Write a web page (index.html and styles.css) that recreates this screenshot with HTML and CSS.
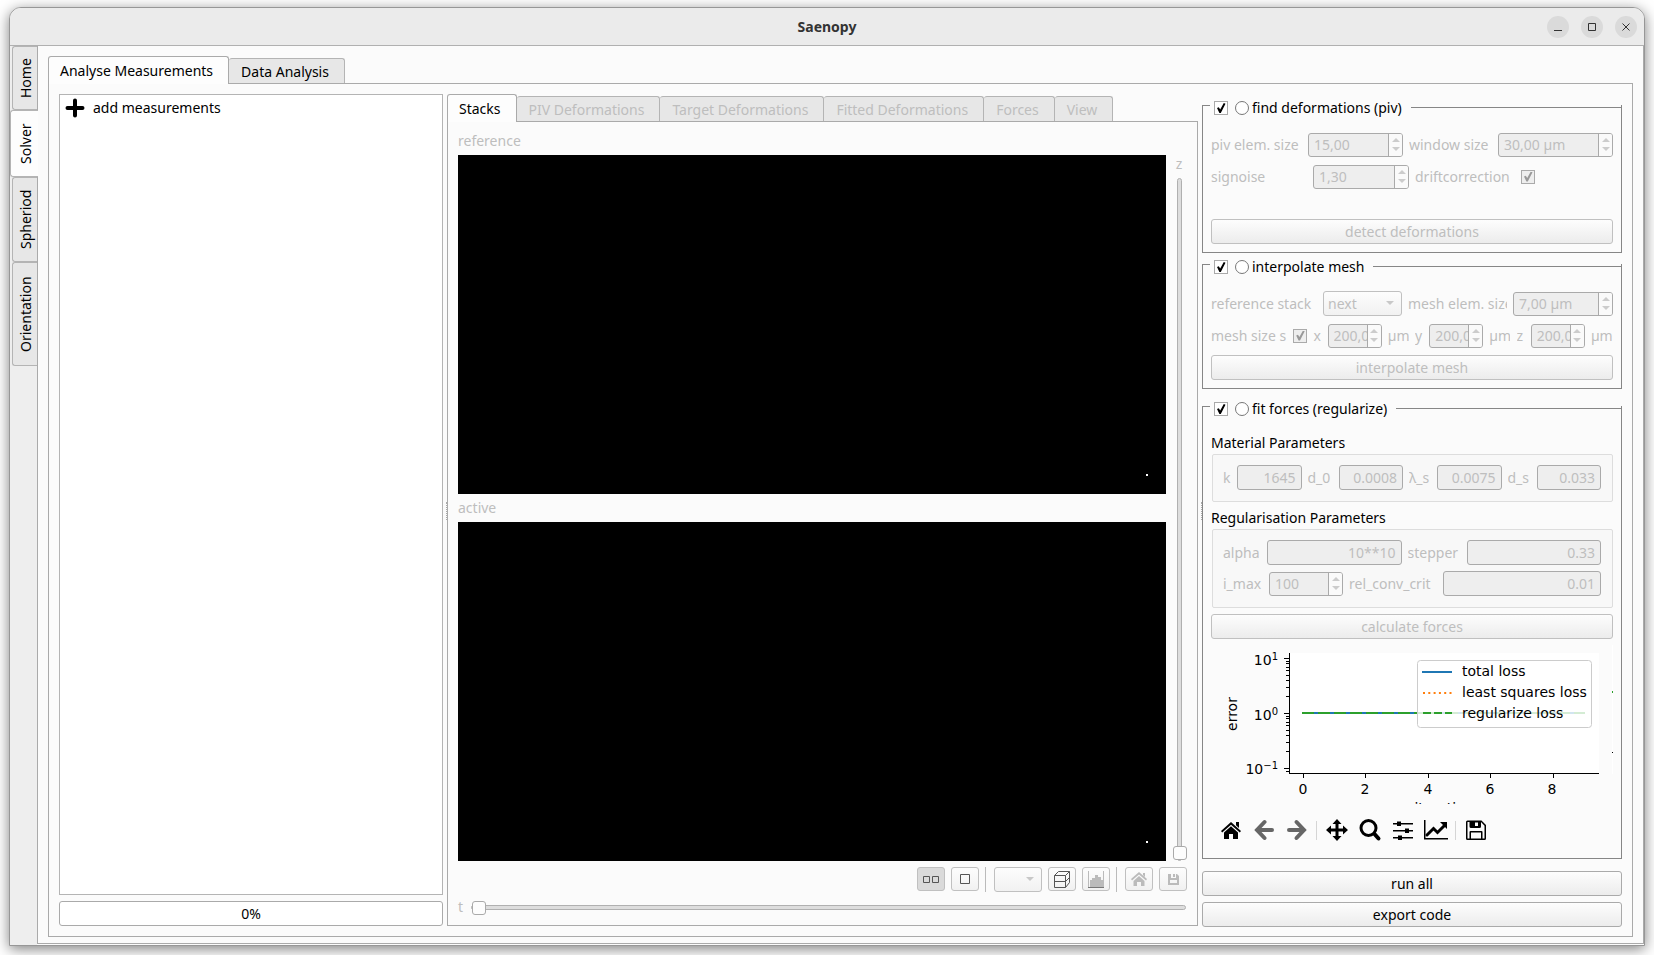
FILE: index.html
```html
<!DOCTYPE html>
<html lang="en">
  <head>
    <meta charset="UTF-8" />
    <meta name="viewport" content="width=device-width, initial-scale=1.0" />
    <title>Saenopy</title>
    <link rel="stylesheet" href="styles.css">
  </head>
  <body>
    <div class="window">
      <header class="titlebar">
        <h1>Saenopy</h1>
        <div class="window-buttons">
          <button type="button" aria-label="Minimize"><svg viewBox="0 0 22 22"><path d="M7 14.5h8" /></svg></button>
          <button type="button" aria-label="Maximize"><svg viewBox="0 0 22 22"><path d="M7.5 7.5h7v7h-7z" /></svg></button>
          <button type="button" aria-label="Close"><svg viewBox="0 0 22 22"><path d="M7.5 7.5l7 7M14.5 7.5l-7 7" /></svg></button>
        </div>
      </header>

      <div class="shell">
        <nav class="side-tabs">
          <button type="button" class="side-tab side-home">Home</button>
          <button type="button" class="side-tab side-solver active">Solver</button>
          <button type="button" class="side-tab side-spheroid">Spheriod</button>
          <button type="button" class="side-tab side-orientation">Orientation</button>
        </nav>

        <main class="page">
          <div class="tabs">
            <button type="button" class="tab active">Analyse Measurements</button>
            <button type="button" class="tab">Data Analysis</button>
          </div>

          <div class="pane workspace">
            <section class="measurements">
              <div class="list">
                <button type="button" class="list-item">
                  <svg viewBox="0 0 20 20"><path d="M10 2.500v15M2.500 10h15" /></svg>
                  add measurements
                </button>
              </div>
              <div class="progress" role="progressbar" aria-valuenow="0">0%</div>
            </section>

            <div class="splitter"></div>

            <section class="viewer">
              <div class="tabs">
                <button type="button" class="tab active">Stacks</button>
                <button type="button" class="tab" disabled>PIV Deformations</button>
                <button type="button" class="tab" disabled>Target Deformations</button>
                <button type="button" class="tab" disabled>Fitted Deformations</button>
                <button type="button" class="tab" disabled>Forces</button>
                <button type="button" class="tab" disabled>View</button>
              </div>
              <div class="pane stacks">
                <div class="stack-area">
                  <div class="stack-images">
                    <p>reference</p>
                    <div class="stack-image"><span class="scale-dot"></span></div>
                    <p>active</p>
                    <div class="stack-image"><span class="scale-dot"></span></div>
                  </div>
                  <div class="z-slider">
                    <label for="z">z</label>
                    <input type="range" id="z" min="0" max="100" value="0" disabled>
                  </div>
                </div>

                <div class="view-tools">
                  <button type="button" class="tool pressed" disabled aria-label="Both stacks">
                    <svg viewBox="0 0 20 20"><path d="M2.500 7.500h6v6h-6zM11.500 7.500h6v6h-6z" /></svg>
                  </button>
                  <button type="button" class="tool" disabled aria-label="Single stack">
                    <svg viewBox="0 0 20 20"><path d="M5.500 5.500h9v9h-9z" /></svg>
                  </button>
                  <span class="tool-sep"></span>
                  <div class="select channel">
                    <select aria-label="Channel" disabled><option></option></select>
                  </div>
                  <button type="button" class="tool" disabled aria-label="Projection">
                    <svg viewBox="0 0 20 20"><path d="M2.500 6.500h11v12h-11zM2.500 6.500l4-4h11l-4 4M17.500 2.500v11l-4 5M2.500 12.500h11l4-4" /></svg>
                  </button>
                  <button type="button" class="tool" disabled aria-label="Contrast">
                    <svg viewBox="0 0 20 20" class="soft"><path class="fill" d="M4 18v-7h2V9h3V6h3v2h3v3h2v7z" /><path d="M2.500 2v16M17.500 2v16" /><path class="dark" d="M2 18.500h16" /></svg>
                  </button>
                  <span class="tool-sep"></span>
                  <button type="button" class="tool" disabled aria-label="Reset view">
                    <svg viewBox="0 0 20 20" class="soft"><path class="fill" d="M10 3l8 7-1 1.500-7-6-7 6L2 10zM14 4h2v4l-2-2zM10 7l5.500 5v5H12v-4H8v4H4.500v-5z" /></svg>
                  </button>
                  <button type="button" class="tool" disabled aria-label="Save view">
                    <svg viewBox="0 0 20 20" class="soft"><path class="fill" d="M5 5h3v4h5V5h1l2 2v9H5zM7 11v3h7v-3zM10 5h2v3h-2z" fill-rule="evenodd" /></svg>
                  </button>
                </div>

                <div class="t-slider">
                  <label for="t">t</label>
                  <input type="range" id="t" min="0" max="100" value="0" disabled>
                </div>
              </div>
            </section>

            <div class="splitter"></div>

            <aside class="parameters">
              <section class="group piv">
                <div class="group-head">
                  <span class="stub"></span>
                  <input type="checkbox" checked aria-label="Enable find deformations">
                  <input type="radio" id="step-piv">
                  <label for="step-piv">find deformations (piv)</label>
                  <span class="rule"></span>
                </div>
                <div class="row row-piv">
                  <label for="elem">piv elem. size</label>
                  <div class="spin"><input type="text" id="elem" value="15,00" disabled><span class="arrows"></span></div>
                  <label for="win">window size</label>
                  <div class="spin"><input type="text" id="win" value="30,00 µm" disabled><span class="arrows"></span></div>
                </div>
                <div class="row row-signoise">
                  <label for="signoise">signoise</label>
                  <div class="spin"><input type="text" id="signoise" value="1,30" disabled><span class="arrows"></span></div>
                  <label for="drift">driftcorrection</label>
                  <input type="checkbox" id="drift" checked disabled>
                </div>
                <button type="button" class="btn push-down" disabled>detect deformations</button>
              </section>

              <section class="group mesh">
                <div class="group-head">
                  <span class="stub"></span>
                  <input type="checkbox" checked aria-label="Enable interpolate mesh">
                  <input type="radio" id="step-mesh">
                  <label for="step-mesh">interpolate mesh</label>
                  <span class="rule"></span>
                </div>
                <div class="row row-reference">
                  <label for="ref">reference stack</label>
                  <div class="select"><select id="ref" disabled><option>next</option></select></div>
                  <label for="mesh-elem">mesh elem. size</label>
                  <div class="spin"><input type="text" id="mesh-elem" value="7,00 µm" disabled><span class="arrows"></span></div>
                </div>
                <div class="row row-mesh">
                  <label for="same">mesh size s</label>
                  <input type="checkbox" id="same" checked disabled>
                  <label for="mx">x</label>
                  <div class="spin"><input type="text" id="mx" value="200,00" disabled><span class="arrows"></span></div>
                  <span>µm</span>
                  <label for="my">y</label>
                  <div class="spin"><input type="text" id="my" value="200,00" disabled><span class="arrows"></span></div>
                  <span>µm</span>
                  <label for="mz">z</label>
                  <div class="spin"><input type="text" id="mz" value="200,00" disabled><span class="arrows"></span></div>
                  <span>µm</span>
                </div>
                <button type="button" class="btn" disabled>interpolate mesh</button>
              </section>

              <section class="group forces">
                <div class="group-head">
                  <span class="stub"></span>
                  <input type="checkbox" checked aria-label="Enable fit forces">
                  <input type="radio" id="step-forces">
                  <label for="step-forces">fit forces (regularize)</label>
                  <span class="rule"></span>
                </div>

                <h2>Material Parameters</h2>
                <div class="box">
                  <div class="row row-material">
                    <label for="k">k</label>
                    <input type="text" id="k" class="field" value="1645" disabled>
                    <label for="d0">d_0</label>
                    <input type="text" id="d0" class="field" value="0.0008" disabled>
                    <label for="ls">λ_s</label>
                    <input type="text" id="ls" class="field" value="0.0075" disabled>
                    <label for="ds">d_s</label>
                    <input type="text" id="ds" class="field" value="0.033" disabled>
                  </div>
                </div>

                <h2>Regularisation Parameters</h2>
                <div class="box">
                  <div class="row row-alpha">
                    <label for="alpha">alpha</label>
                    <input type="text" id="alpha" class="field" value="10**10" disabled>
                    <label for="stepper">stepper</label>
                    <input type="text" id="stepper" class="field" value="0.33" disabled>
                  </div>
                  <div class="row row-imax">
                    <label for="imax">i_max</label>
                    <div class="spin"><input type="text" id="imax" value="100" disabled><span class="arrows"></span></div>
                    <label for="crit">rel_conv_crit</label>
                    <input type="text" id="crit" class="field" value="0.01" disabled>
                  </div>
                </div>
                <button type="button" class="btn" disabled>calculate forces</button>

                <svg class="plot" viewBox="0 0 402 159" id="plot">
                  <rect x="79" y="8" width="309" height="121" fill="#fff" />
                  <g id="ticks" stroke="#000">
                    <path d="M78.500 8v121M78 128.500h310" fill="none" />
                  </g>
                  <g class="loss">
                    <path d="M91 68h283" stroke="#1f77b4" />
                    <path d="M91 68h283" stroke="#2ca02c" stroke-dasharray="12 4" />
                  </g>
                  <rect x="206.500" y="15.500" width="174" height="67" rx="3" fill="#fff" fill-opacity=".8" stroke="#ccc" />
                  <g class="loss">
                    <path d="M211 27h30" stroke="#1f77b4" />
                    <path d="M212 48h29" stroke="#ff7f0e" stroke-dasharray="2 3.300" />
                    <path d="M212 68h29" stroke="#2ca02c" stroke-dasharray="8 3" />
                  </g>
                  <text x="251" y="31">total loss</text>
                  <text x="251" y="52">least squares loss</text>
                  <text x="251" y="73">regularize loss</text>
                  <text class="end" x="67" y="20">10<tspan class="sup" dy="-5">1</tspan></text>
                  <text class="end" x="67" y="75">10<tspan class="sup" dy="-5">0</tspan></text>
                  <text class="end" x="67" y="129">10<tspan class="sup" dy="-5">−1</tspan></text>
                  <text class="mid" x="92" y="149">0</text>
                  <text class="mid" x="154" y="149">2</text>
                  <text class="mid" x="217" y="149">4</text>
                  <text class="mid" x="279" y="149">6</text>
                  <text class="mid" x="341" y="149">8</text>
                  <text class="mid" transform="translate(26 69) rotate(-90)">error</text>
                  <text class="mid" x="233" y="168">iteration</text>
                  <path d="M401.500 0v129" stroke="#fff" />
                  <path d="M401 46h1v2h-1z" fill="#2ca02c" />
                  <path d="M401 107h1v1h-1z" />
                </svg>

                <div class="plot-tools">
                  <button type="button" aria-label="Home"><svg viewBox="0 0 24 24"><path d="M12 4l10 9-1.200 1.500L12 6.700 3.200 14.500 2 13zM17 4h3v6l-3-2.700zM12 8.300l7 6.200V21h-5v-5h-4v5H5v-6.500z" /></svg></button>
                  <button type="button" class="dim" aria-label="Back"><svg viewBox="0 0 24 24"><path class="thick" d="M12.500 4L5 12l7.500 8M5 12h15" /></svg></button>
                  <button type="button" class="dim" aria-label="Forward"><svg viewBox="0 0 24 24"><path class="thick" d="M11.500 4l7.500 8-7.500 8M19 12H4" /></svg></button>
                  <span class="bar"></span>
                  <button type="button" aria-label="Pan"><svg viewBox="0 0 24 24"><path d="M12 1l4.500 5h-3v4.500H18v-3l5 4.500-5 4.500v-3h-4.500V18h3L12 23l-4.500-5h3v-4.500H6v3L1 12l5-4.500v3h4.500V6h-3z" /></svg></button>
                  <button type="button" aria-label="Zoom"><svg viewBox="0 0 24 24"><circle class="lens" cx="10.500" cy="10" r="7.500" /><path class="thick" d="M16.500 16l4 4.500" /></svg></button>
                  <button type="button" aria-label="Configure subplots"><svg viewBox="0 0 24 24"><path d="M2 5h20v1.500H2zM2 12h20v1.500H2zM2 19h20v1.500H2zM6 3.500h4v4.500H6zM14 10.500h4V15h-4zM7 17.500h4V22H7z" /></svg></button>
                  <button type="button" aria-label="Edit axis"><svg viewBox="0 0 24 24"><path d="M0 2h1.500v18H24v1.500H0z" /><path class="trend" d="M3 17l6.500-6.500 4 4L21 7" /><path d="M16 4h7v7z" /></svg></button>
                  <span class="bar"></span>
                  <button type="button" aria-label="Save"><svg viewBox="0 0 24 24"><path fill-rule="evenodd" d="M2 4q0-1.500 1.500-1.500h14l4.500 4.500v13.500q0 1.500-1.500 1.500h-17Q2 22 2 20.500zM3.500 4v16.500h2V14q0-1 1-1h11q1 0 1 1v6.500h2V7.700L17 4v4.500q0 1.500-1.500 1.500H7Q5.500 10 5.500 8.500V4zM11 4.500V8h3V4.500zM7 14.500v6h10v-6z" /></svg></button>
                </div>
              </section>

              <button type="button" class="btn">run all</button>
              <button type="button" class="btn">export code</button>
            </aside>
          </div>
        </main>
      </div>
    </div>

    <script>
      const ticks = document.getElementById("ticks");

      function addTick(d) {
        const path = document.createElementNS("http://www.w3.org/2000/svg", "path");
        path.setAttribute("d", d);
        ticks.appendChild(path);
      }

      [92.5, 154.5, 217.5, 279.5, 342.5].forEach((x) => addTick(`M${x} 129v4`));

      // log axis, one decade is 55px high
      for (let decade = -2; decade <= 1; decade++) {
        for (let k = 1; k < 10; k++) {
          const y = 68.5 - 55 * (decade + Math.log10(k));
          if (y < 8 || y > 128) continue;
          addTick(`M78 ${Math.floor(y) + 0.5}h${k === 1 ? -5 : -3}`);
        }
      }
    </script>
  </body>
</html>
```
FILE: styles.css
```css
* {
  box-sizing: border-box;
}

body {
  margin: 0;
  height: 100vh;
  padding: 7px 9px 9px;
  background: #fff;
  color: #000;
  font-family: "Noto Sans", "Open Sans", sans-serif;
  font-size: 14px;
  line-height: 20px;
  overflow: hidden;
}

button,
input,
select {
  font: inherit;
  color: inherit;
  margin: 0;
}

h1,
h2,
p {
  margin: 0;
  font-size: inherit;
  font-weight: normal;
}

.window {
  display: flex;
  flex-direction: column;
  height: 100%;
  border: 1px solid #979797;
  border-radius: 12px 12px 0 0;
  background: #fbfbfb;
  box-shadow: 0 3px 14px rgba(0, 0, 0, 0.5);
}

/* title bar */
.titlebar {
  display: grid;
  grid-template-columns: 1fr auto 1fr;
  align-items: center;
  height: 38px;
  padding: 0 7px;
  border-bottom: 1px solid #b0b0b0;
  border-radius: 11px 11px 0 0;
  background: #ebebeb;
  flex: none;
}

.titlebar h1 {
  grid-column: 2;
  font-weight: bold;
  color: #333;
}

.window-buttons {
  display: flex;
  justify-content: flex-end;
  gap: 12px;
}

.window-buttons button {
  width: 22px;
  height: 22px;
  padding: 0;
  border: 0;
  border-radius: 50%;
  background: #dadada;
}

.window-buttons svg {
  display: block;
  fill: none;
  stroke: #333;
}

.shell {
  display: flex;
  flex: 1;
  min-height: 0;
}

/* vertical tabs */
.side-tabs {
  width: 27px;
  background: #eee;
  flex: none;
}

.side-tab {
  display: block;
  width: 25px;
  margin-left: 2px;
  padding: 0 2px 0 0;
  border: 1px solid #b4b4b4;
  border-left-width: 0;
  border-radius: 0 3px 3px 0;
  background: #e7e7e7;
  writing-mode: vertical-rl;
  transform: rotate(180deg);
}

.side-tab.active {
  position: relative;
  width: 28px;
  margin-left: 0;
  background: #fdfdfd;
}

.side-home {
  height: 64px;
}

.side-solver {
  height: 67px;
}

.side-spheroid {
  height: 85px;
}

.side-orientation {
  height: 104px;
}

.page {
  display: flex;
  flex-direction: column;
  flex: 1;
  min-width: 0;
  padding: 10px 10px 6px;
  margin-bottom: 1px;
  border: 1px solid #aaa;
  border-top: 0;
}

/* horizontal tabs */
.tabs {
  display: flex;
  align-items: flex-end;
  height: 28px;
  margin-bottom: -1px;
  flex: none;
}

.tab {
  height: 26px;
  padding: 2px 15px 0 12px;
  border: 1px solid #b4b4b4;
  border-left-width: 0;
  border-bottom-color: #aaa;
  border-radius: 3px 3px 0 0;
  background: #e7e7e7;
  white-space: nowrap;
}

.tab.active {
  position: relative;
  height: 28px;
  padding: 0 15px 0 11px;
  border-color: #aaa;
  border-left-width: 1px;
  border-bottom: 0;
  background: #fdfdfd;
}

.tab:disabled {
  color: #bebebe;
}

.pane {
  flex: 1;
  min-height: 0;
  border: 1px solid #aaa;
}

.workspace {
  display: flex;
  padding: 10px 10px 9px;
}

.splitter {
  width: 4px;
  height: 18px;
  align-self: center;
  border-right: 1px dotted #aaa;
  flex: none;
}

/* measurement list */
.measurements {
  display: flex;
  flex-direction: column;
  gap: 6px;
  width: 384px;
  flex: none;
}

.list {
  flex: 1;
  border: 1px solid #b4b4b4;
  background: #fff;
}

.list-item {
  display: flex;
  align-items: center;
  gap: 8px;
  width: 100%;
  padding: 3px 5px;
  border: 0;
  background: none;
}

.list-item svg {
  width: 20px;
  height: 20px;
  stroke: #000;
  stroke-width: 4;
  stroke-linecap: round;
}

.progress {
  height: 25px;
  border: 1px solid #aaa;
  border-radius: 3px;
  background: #fff;
  text-align: center;
  line-height: 23px;
  margin-bottom: 1px;
}

/* image stacks */
.viewer {
  display: flex;
  flex-direction: column;
  flex: 1;
  min-width: 0;
}

.stacks {
  display: flex;
  flex-direction: column;
  padding: 9px 11px 11px 10px;
  margin-bottom: 1px;
  color: #bebebe;
}

.stack-area {
  display: flex;
  flex: 1;
  gap: 6px;
}

.stack-images {
  display: flex;
  flex-direction: column;
  gap: 4px;
  flex: 1;
}

.stack-image {
  display: flex;
  justify-content: flex-end;
  align-items: flex-end;
  flex: 1;
  padding: 18px;
  background: #000;
}

.scale-dot {
  width: 2px;
  height: 2px;
  background: #fff;
}

.z-slider {
  display: flex;
  flex-direction: column;
  align-items: center;
  gap: 4px;
  width: 14px;
  padding-top: 23px;
}

.z-slider input {
  writing-mode: vertical-lr;
  direction: rtl;
  width: 14px;
  flex: 1;
  min-height: 0;
}

.t-slider {
  display: flex;
  align-items: center;
  gap: 8px;
  height: 14px;
  margin-top: 8px;
}

.t-slider input {
  flex: 1;
  height: 14px;
}

input[type="range"] {
  appearance: none;
  background: none;
}

input[type="range"]::-webkit-slider-runnable-track {
  border: 1px solid #b0b0b0;
  border-radius: 3px;
  background: #ddd;
}

.z-slider input::-webkit-slider-runnable-track {
  width: 5px;
}

.t-slider input::-webkit-slider-runnable-track {
  height: 5px;
}

input[type="range"]::-webkit-slider-thumb {
  appearance: none;
  width: 14px;
  height: 14px;
  border: 1px solid #aaa;
  border-radius: 3px;
  background: #fdfdfd;
}

.z-slider input::-webkit-slider-thumb {
  margin-left: -5px;
}

.t-slider input::-webkit-slider-thumb {
  margin-top: -5px;
}

.view-tools {
  display: flex;
  justify-content: flex-end;
  gap: 6px;
  margin-top: 6px;
  margin-right: -1px;
}

.tool {
  width: 28px;
  height: 24px;
  padding: 1px 3px;
  border: 1px solid #c0c0c0;
  border-radius: 3px;
  background: linear-gradient(#fdfdfd, #f1f1f1);
}

.tool.pressed {
  background: #dadada;
}

.tool svg {
  display: block;
  width: 20px;
  height: 20px;
  fill: none;
  stroke: #555;
}

.tool svg.soft {
  stroke: #bbb;
}

.tool svg .fill {
  fill: #bbb;
  stroke: none;
}

.tool svg .dark {
  stroke: #777;
}

.tool-sep {
  width: 2px;
  margin-right: 1px;
  border-left: 1px solid #bbb;
}

/* drop-downs */
.select {
  position: relative;
  height: 25px;
}

.channel {
  width: 48px;
}

.select::after {
  content: "";
  position: absolute;
  right: 8px;
  top: 10px;
  border: 4px solid transparent;
  border-top-color: #c8c8c8;
}

.select select {
  appearance: none;
  width: 100%;
  height: 100%;
  padding: 0 4px;
  border: 1px solid #c0c0c0;
  border-radius: 3px;
  background: linear-gradient(#fdfdfd, #f1f1f1);
  opacity: 1;
}

/* parameter groups */
.parameters {
  display: flex;
  flex-direction: column;
  width: 420px;
  gap: 6px;
  flex: none;
}

.group {
  display: flex;
  flex-direction: column;
  padding: 0 8px 8px;
  border: 1px solid #868686;
  border-top: 0;
}

.piv {
  height: 148px;
  margin-top: 11px;
}

.mesh {
  height: 125px;
  margin-top: 5px;
}

.forces {
  flex: 1;
  margin: 11px 0 6px;
}

.group-head {
  display: flex;
  align-items: center;
  height: 20px;
  margin: -7px -8px 0;
  flex: none;
}

.group-head input[type="radio"] {
  margin: 0 3px 0 7px;
}

.stub {
  width: 7px;
  height: 6px;
  margin-right: 4px;
  border-top: 1px solid #868686;
}

.rule {
  flex: 1;
  height: 1px;
  margin: 0 0 2px 9px;
  background: #868686;
}

input[type="checkbox"] {
  appearance: none;
  width: 14px;
  height: 14px;
  border: 1px solid #aaa;
  background: #fff;
  flex: none;
}

input[type="checkbox"]::before {
  content: "";
  display: block;
  width: 10px;
  height: 10px;
  margin: 1px;
  background: #000;
  clip-path: polygon(10% 50%, 28% 42%, 42% 66%, 78% 0, 95% 8%, 48% 100%, 34% 100%);
}

input[type="checkbox"]:disabled {
  background: #eee;
}

input[type="checkbox"]:disabled::before {
  background: #999;
}

input[type="radio"] {
  appearance: none;
  width: 14px;
  height: 14px;
  border: 1px solid #777;
  border-radius: 50%;
  background: #fff;
  flex: none;
}

.row {
  display: grid;
  align-items: center;
  column-gap: 6px;
  height: 25px;
  color: #bebebe;
  flex: none;
}

.row label,
.row span {
  overflow: hidden;
  white-space: nowrap;
}

.group > .row {
  margin-bottom: 7px;
}

.group-head + .row {
  margin-top: 14px;
}

.row-piv {
  grid-template-columns: 91px 95px 83px 1fr;
}

.row-signoise {
  grid-template-columns: 96px 96px 100px auto;
  justify-content: start;
}

.row-reference {
  grid-template-columns: 106px 79px 99px 1fr;
}

.row-mesh {
  grid-template-columns: 76px 14px 8px 54px 21px 8px 54px 21px 8px 54px 22px;
  justify-content: space-between;
  column-gap: 0;
}

.row-material {
  grid-template-columns: 8px 1fr 25px 1fr 22px 1fr 23px 1fr;
}

.row-alpha {
  grid-template-columns: 38px 1fr 53px 1fr;
}

.row-imax {
  grid-template-columns: 40px 74px 88px 1fr;
}

.spin {
  display: flex;
  height: 24px;
  border: 1px solid #aaa;
  border-radius: 3px;
  background: #eee;
  overflow: hidden;
}

.spin input {
  flex: 1;
  width: 0;
  min-width: 0;
  padding: 0 0 0 5px;
  border: 0;
  background: none;
}

.row .arrows {
  display: flex;
  flex-direction: column;
  align-items: center;
  justify-content: center;
  gap: 5px;
  width: 14px;
  border-left: 1px solid #aaa;
  background: #fafafa;
}

.arrows::before,
.arrows::after {
  content: "";
  border: 4px solid transparent;
}

.arrows::before {
  border-top: 0;
  border-bottom-color: #ccc;
}

.arrows::after {
  border-bottom: 0;
  border-top-color: #ccc;
}

.field {
  width: 100%;
  min-width: 0;
  height: 25px;
  padding: 0 5px;
  border: 1px solid #aaa;
  border-radius: 3px;
  background: #eee;
  text-align: right;
}

.btn {
  height: 25px;
  padding: 0;
  border: 1px solid #aaa;
  border-radius: 3px;
  background: linear-gradient(#fdfdfd, #ececec);
  flex: none;
}

.btn:disabled {
  border-color: #c0c0c0;
  color: #bebebe;
}

.push-down {
  margin-top: auto;
}

.forces h2 {
  margin: 6px 0 1px;
}

.forces .group-head + h2 {
  margin-top: 14px;
}

.box {
  display: flex;
  flex-direction: column;
  gap: 6px;
  margin-left: 1px;
  padding: 10px 11px 11px 10px;
  border: 1px solid #ddd;
  border-radius: 2px;
  background: #f8f8f8;
}

.box + .btn {
  margin-top: 6px;
}

/* loss plot */
.plot {
  display: block;
  margin-top: 6px;
  width: 100%;
  flex: none;
}

.plot text {
  font-family: "DejaVu Sans", sans-serif;
  font-size: 14px;
}

.plot .sup {
  font-size: 10px;
}

.plot .end {
  text-anchor: end;
}

.plot .mid {
  text-anchor: middle;
}

.loss {
  fill: none;
  stroke-width: 2;
}

.plot-tools {
  display: flex;
  align-items: center;
  margin-top: 14px;
  padding-left: 3px;
}

.plot-tools button {
  width: 33px;
  height: 24px;
  padding: 0 4px 0 5px;
  border: 0;
  background: none;
}

.plot-tools svg {
  display: block;
  width: 24px;
  height: 24px;
}

.plot-tools .dim {
  fill: #666;
  color: #666;
}

.plot-tools .thick,
.plot-tools .lens,
.plot-tools .trend {
  fill: none;
  stroke: currentColor;
  stroke-width: 4;
  stroke-linecap: round;
}

.plot-tools .lens,
.plot-tools .trend {
  stroke-width: 3;
}

.bar {
  width: 1px;
  height: 19px;
  margin: 0 3px;
  background: #d5d5d5;
}
```
